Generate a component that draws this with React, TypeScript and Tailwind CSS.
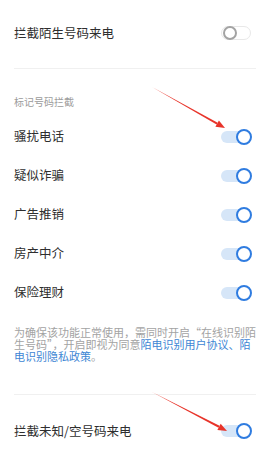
import React from 'react';

const font = { fontFamily: '"Noto Sans CJK SC", "Noto Sans", sans-serif' };

const Toggle: React.FC<{ on: boolean }> = ({ on }) => {
  if (!on) {
    return (
      <div className="relative flex h-[16px] w-[31px] items-center">
        <div className="h-[14px] w-[30px] rounded-full border border-[#e8e8e8] bg-white" />
        <div className="absolute left-[2px] top-[1px] h-[14px] w-[14px] rounded-full border-2 border-[#a3a3a3] bg-white" />
      </div>
    );
  }
  return (
    <div className="relative flex h-[16px] w-[31px] items-center">
      <div className="h-[12px] w-[29px] rounded-full bg-[#d6e6f8]" />
      <div className="absolute right-0 top-0 h-[16px] w-[16px] rounded-full border-2 border-[#2f7ce0] bg-white" />
    </div>
  );
};

const Row: React.FC<{ label: string; on: boolean; h?: string }> = ({ label, on, h = 'h-[39px]' }) => (
  <div className={`flex items-center justify-between ${h}`}>
    <span className="text-[12.5px] text-[#2e2e2e]">{label}</span>
    <div className="mr-[4px]">
      <Toggle on={on} />
    </div>
  </div>
);

const Arrow: React.FC<{ x1: number; y1: number; x2: number; y2: number }> = ({ x1, y1, x2, y2 }) => {
  const dx = x2 - x1;
  const dy = y2 - y1;
  const len = Math.sqrt(dx * dx + dy * dy);
  const ux = dx / len;
  const uy = dy / len;
  const nx = -uy;
  const ny = ux;
  const headLen = 9;
  const bx = x2 - ux * headLen;
  const by = y2 - uy * headLen;
  const shaft = [
    [x1, y1],
    [bx + nx * 1.1, by + ny * 1.1],
    [bx - nx * 1.1, by - ny * 1.1],
  ];
  const head = [
    [x2, y2],
    [bx + nx * 3.6, by + ny * 3.6],
    [bx - nx * 3.6, by - ny * 3.6],
  ];
  return (
    <>
      <polygon points={shaft.map((p) => p.join(',')).join(' ')} fill="#e8342a" />
      <polygon points={head.map((p) => p.join(',')).join(' ')} fill="#e8342a" />
    </>
  );
};

const App: React.FC = () => {
  return (
    <div className="relative h-[451px] w-[270px] overflow-hidden bg-white" style={font}>
      <div className="px-[14px]">
        {/* top switch */}
        <Row label="拦截陌生号码来电" on={false} h="h-[66px]" />
        <div className="mt-[2px] h-px bg-[#f0f0f0]" />

        {/* marked numbers */}
        <div className="pt-[26px] h-[48px]">
          <div className="text-[10px] leading-[14px] text-[#9b9b9b]">标记号码拦截</div>
        </div>
        <Row label="骚扰电话" on />
        <Row label="疑似诈骗" on />
        <Row label="广告推销" on />
        <Row label="房产中介" on />
        <Row label="保险理财" on />

        <p className="mt-[14px] w-[243px] text-[11px] leading-[12px] text-[#a3a3a3]">
          为确保该功能正常使用，需同时开启“在线识别陌生号码”，开启即视为同意
          <span className="text-[#3d86d4]">陌电识别用户协议、陌电识别隐私政策</span>。
        </p>

        <div className="mt-[32px] h-px bg-[#f0f0f0]" />
        <Row label="拦截未知/空号码来电" on h="h-[72px]" />
      </div>

      {/* annotation arrows */}
      <svg className="pointer-events-none absolute left-0 top-0" width="270" height="451">
        <Arrow x1={152} y1={87} x2={225} y2={128} />
        <Arrow x1={152} y1={392} x2={227} y2={431} />
      </svg>
    </div>
  );
};

export default App;
